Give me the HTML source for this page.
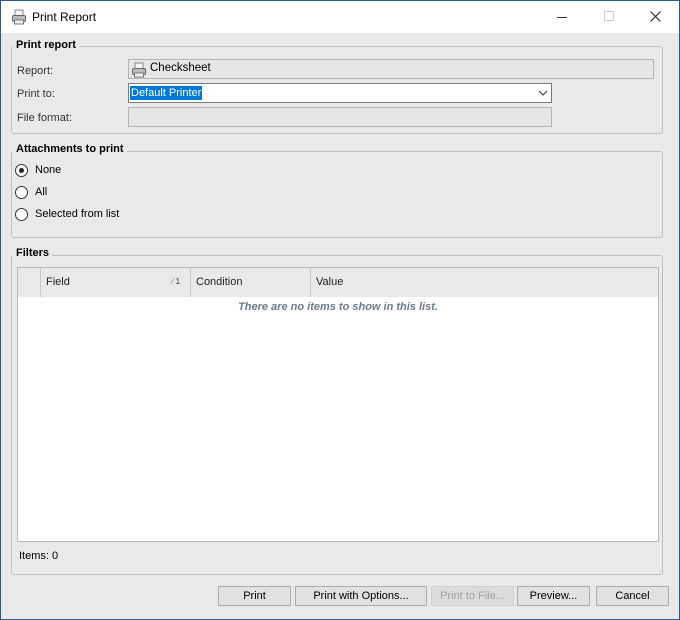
<!DOCTYPE html>
<html><head><style>
*{box-sizing:border-box;margin:0;padding:0}
body{width:680px;height:620px;background:#f0f0f0;font-family:"Liberation Sans",Tahoma,sans-serif;font-size:11px;color:#000;position:relative;overflow:hidden}
.win{position:absolute;left:0;top:0;width:680px;height:620px;border:1px solid #2b5a8a;background:#e9e9e9}
.title{position:absolute;left:0;top:0;width:678px;height:32px;background:#fff}
.a{position:absolute}
.grp{position:absolute;border:1px solid #c0c0c0;border-radius:3px}
.gl{position:absolute;background:#e9e9e9;font-weight:bold;padding:0 3px;font-size:11px}
.lbl{position:absolute;color:#333}
.fld{position:absolute;border:1px solid #b4b4b4;background:#e6e6e6;height:20px}
.radio{position:absolute;width:13px;height:13px;border:1px solid #333;border-radius:50%;background:#fff}
.btn{position:absolute;top:585px;height:20px;border:1px solid #adadad;background:#e1e1e1;text-align:center;line-height:18px;font-size:11px}
.hd{position:absolute;top:0;height:29px;border-right:1px solid #c8c8c8;line-height:29px;padding-left:5px;color:#222}
</style></head><body>
<div class="win">
<div class="title">
 <svg class="a" style="left:10px;top:8px" width="16" height="16" viewBox="0 0 16 16"><rect x="4" y="1" width="8" height="6" fill="#f4f4f4" stroke="#888"/><rect x="1.5" y="6.5" width="13" height="6" rx="1.5" fill="#bbb" stroke="#666"/><rect x="3.5" y="11" width="9" height="4" fill="#eee" stroke="#777"/></svg>
 <div class="a" style="left:31px;top:9px;font-size:12px">Print Report</div>
 <div class="a" style="left:556px;top:16px;width:10px;height:1px;background:#333"></div>
 <div class="a" style="left:603px;top:10px;width:10px;height:10px;border:1px solid #ccc"></div>
 <svg class="a" style="left:649px;top:10px" width="11" height="11"><path d="M0.5 0.5L10.5 10.5M10.5 0.5L0.5 10.5" stroke="#222" stroke-width="1.1"/></svg>
</div>

<div class="grp" style="left:10px;top:45px;width:652px;height:88px"></div>
<div class="gl" style="left:12px;top:38px">Print report</div>
<div class="lbl" style="left:16px;top:64px">Report:</div>
<div class="lbl" style="left:16px;top:87px">Print to:</div>
<div class="lbl" style="left:16px;top:111px">File format:</div>
<div class="fld" style="left:127px;top:58px;width:526px"><svg class="a" style="left:2px;top:2px" width="16" height="16" viewBox="0 0 16 16"><rect x="4" y="1" width="8" height="6" fill="#f4f4f4" stroke="#888"/><rect x="1.5" y="6.5" width="13" height="6" rx="1.5" fill="#bbb" stroke="#666"/><rect x="3.5" y="11" width="9" height="4" fill="#eee" stroke="#777"/></svg><span class="a" style="left:21px;top:2px;font-size:11.5px">Checksheet</span></div>
<div class="fld" style="left:127px;top:82px;width:424px;background:#fff;border-color:#7a7a7a"><span class="a" style="left:1px;top:2px;background:#0078d7;color:#fff;padding:0 1px;height:14px;line-height:14px">Default Printer</span>
<svg class="a" style="left:409px;top:6px" width="10" height="7"><path d="M1 1l4 4 4-4" fill="none" stroke="#333"/></svg></div>
<div class="fld" style="left:127px;top:106px;width:424px"></div>

<div class="grp" style="left:10px;top:150px;width:652px;height:87px"></div>
<div class="gl" style="left:12px;top:142px">Attachments to print</div>
<div class="radio" style="left:14px;top:163px"><div class="a" style="left:3px;top:3px;width:5px;height:5px;border-radius:50%;background:#222"></div></div>
<div class="a" style="left:34px;top:163px">None</div>
<div class="radio" style="left:14px;top:185px"></div>
<div class="a" style="left:34px;top:185px">All</div>
<div class="radio" style="left:14px;top:207px"></div>
<div class="a" style="left:34px;top:207px">Selected from list</div>

<div class="grp" style="left:10px;top:254px;width:652px;height:320px"></div>
<div class="gl" style="left:12px;top:246px">Filters</div>
<div class="a" style="left:16px;top:266px;width:642px;height:275px;border:1px solid #bbb;background:#fff">
 <div class="a" style="left:0;top:0;width:640px;height:29px;background:#e9e9e9"></div>
 <div class="hd" style="left:0;width:23px"></div>
 <div class="hd" style="left:23px;width:150px">Field</div>
 <div style="position:absolute;left:154px;top:9px;font-size:8px;line-height:10px;color:#777">⁄<span style="font-size:8px;color:#333"> 1</span></div>
 <div class="hd" style="left:173px;width:120px">Condition</div>
 <div class="hd" style="left:293px;width:347px;border:none">Value</div>
 <div class="a" style="left:0;top:33px;width:640px;text-align:center;font-weight:bold;font-style:italic;color:#6a7a8c">There are no items to show in this list.</div>
</div>
<div class="a" style="left:18px;top:549px">Items: 0</div>

<div class="btn" style="left:217px;width:73px">Print</div>
<div class="btn" style="left:294px;width:132px">Print with Options...</div>
<div class="btn" style="left:430px;width:83px;color:#a0a0a0;border-color:#cfcfcf;background:#dcdcdc">Print to File...</div>
<div class="btn" style="left:516px;width:73px">Preview...</div>
<div class="btn" style="left:595px;width:73px">Cancel</div>
</div>
</body></html>
